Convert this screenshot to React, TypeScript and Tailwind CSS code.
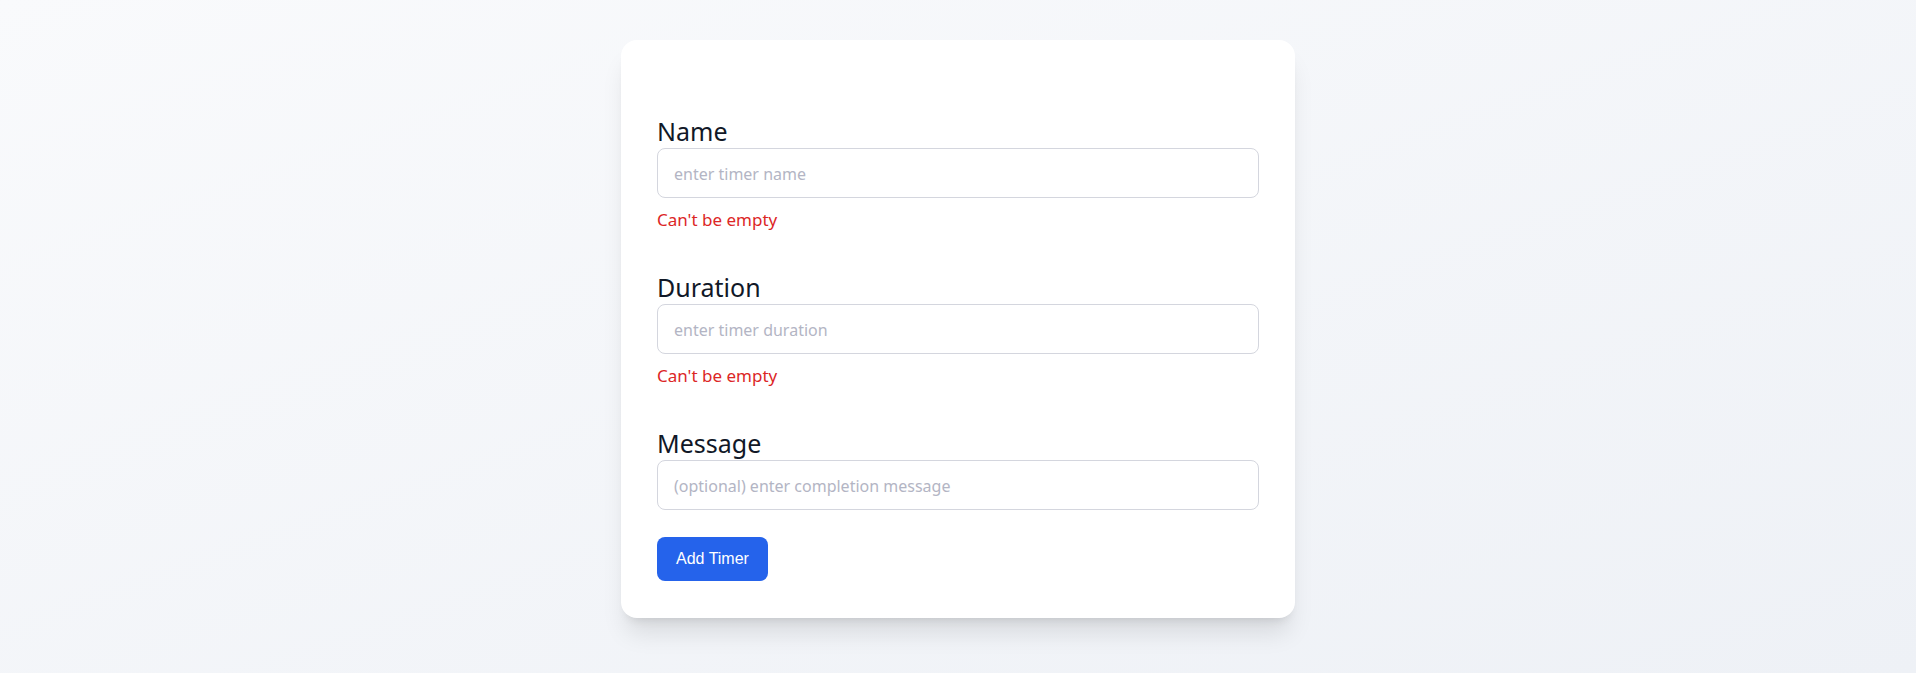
import React, { useState } from "react";

type Field = {
  id: string;
  label: string;
  placeholder: string;
  error?: string;
};

const fields: Field[] = [
  { id: "name", label: "Name", placeholder: "enter timer name", error: "Can't be empty" },
  { id: "duration", label: "Duration", placeholder: "enter timer duration", error: "Can't be empty" },
  { id: "message", label: "Message", placeholder: "(optional) enter completion message" },
];

export default function App() {
  const [values, setValues] = useState<Record<string, string>>({});

  return (
    <div
      className="min-h-screen w-full bg-linear-to-br from-[#f9fafc] to-[#eef1f6] flex justify-center"
      style={{ fontFamily: '"Noto Sans", "Open Sans", sans-serif' }}
    >
      <form
        onSubmit={(e) => e.preventDefault()}
        className="mt-10 mb-10 w-[674px] self-start rounded-2xl bg-white px-9 pt-[75px] pb-[37px] shadow-xl flex flex-col"
      >
        {fields.map((f) => (
          <div key={f.id} className={f.error ? "mb-[39px] flex flex-col" : "flex flex-col"}>
            <label htmlFor={f.id} className="text-[25px] leading-8 text-[#111827]">
              {f.label}
            </label>
            <input
              id={f.id}
              value={values[f.id] ?? ""}
              onChange={(e) => setValues({ ...values, [f.id]: e.target.value })}
              placeholder={f.placeholder}
              className="mt-px h-[50px] w-full rounded-lg border border-[#d4d6de] bg-white px-4 pt-px text-base text-gray-900 placeholder:text-[#b3b5c4] outline-none"
            />
            {f.error && (
              <p className="mt-2.5 text-[17px] leading-6 text-[#dc2626]">{f.error}</p>
            )}
          </div>
        ))}

        <div className="mt-[27px]">
          <button
            type="submit"
            className="h-[44px] rounded-lg bg-[#2563eb] px-[19px] text-base text-white"
            style={{ fontFamily: '"Liberation Sans", Arial, sans-serif' }}
          >
            Add Timer
          </button>
        </div>
      </form>
    </div>
  );
}
